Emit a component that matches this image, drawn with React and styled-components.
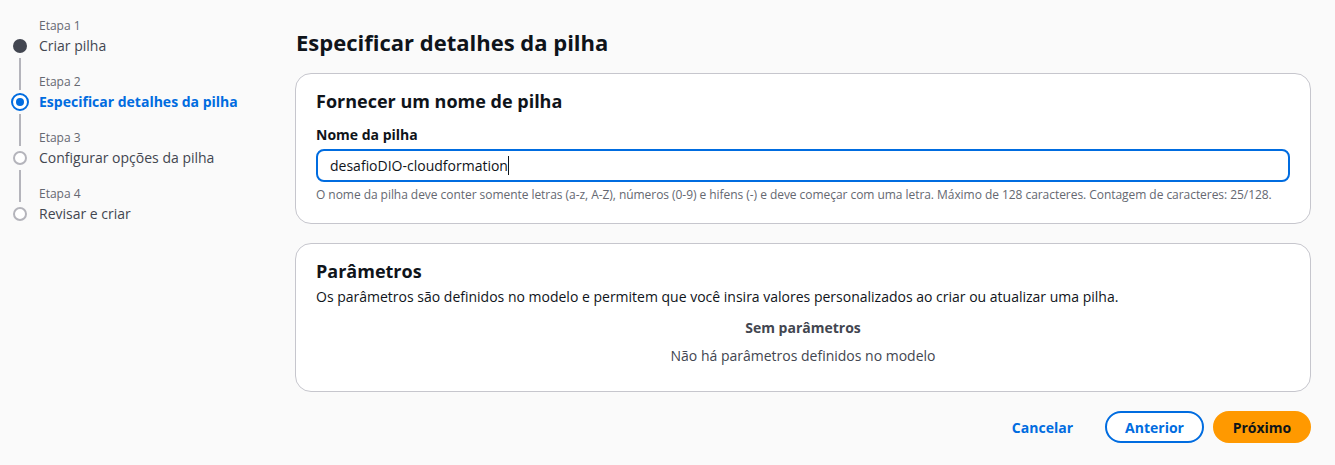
import styled, { createGlobalStyle } from "styled-components";

const GlobalStyle = createGlobalStyle`
    body {
        margin: 0;
        background: #fafafa;
        font-family: "Open Sans", "Noto Sans", sans-serif;
        color: #0f141a;
    }
`;

const Page = styled.div`
    display: flex;
    width: 1335px;
    height: 465px;
    box-sizing: border-box;
    padding: 16px 24px 0 13px;
`;

const Sidebar = styled.nav`
    width: 282px;
    flex-shrink: 0;
`;

const Step = styled.div`
    display: grid;
    grid-template-columns: 14px 1fr;
    grid-template-rows: 18px 24px 14px;
    column-gap: 12px;
`;

const Rail = styled.div`
    display: flex;
    justify-content: center;
`;

const Line = styled.div`
    width: 2px;
    height: 100%;
    background: ${(p) => (p.$hidden ? "transparent" : "#b4b4bb")};
`;

const Dot = styled.div`
    align-self: center;
    justify-self: center;
    width: ${(p) => (p.$state === "active" ? 18 : 14)}px;
    height: ${(p) => (p.$state === "active" ? 18 : 14)}px;
    box-sizing: border-box;
    border-radius: 50%;
    display: flex;
    align-items: center;
    justify-content: center;
    ${(p) =>
        p.$state === "done"
            ? "background: #424650;"
            : p.$state === "active"
            ? "border: 2px solid #006ce0; background: #fff;"
            : "border: 2px solid #b4b4bb; background: #fff;"}
`;

const InnerDot = styled.div`
    width: 8px;
    height: 8px;
    border-radius: 50%;
    background: #006ce0;
`;

const StepLabel = styled.div`
    padding-top: 2px;
    font-size: 12px;
    line-height: 16px;
    color: #656871;
`;

const StepTitle = styled.div`
    font-size: 14px;
    line-height: 24px;
    color: ${(p) => (p.$active ? "#006ce0" : "#424650")};
    font-weight: ${(p) => (p.$active ? 700 : 400)};
    white-space: nowrap;
`;

const Main = styled.main`
    flex: 1;
    display: flex;
    flex-direction: column;
`;

const PageTitle = styled.h1`
    margin: 12px 0 0 1px;
    font-size: 22px;
    line-height: 28px;
    font-weight: 700;
`;

const Card = styled.section`
    margin-top: ${(p) => p.$top}px;
    background: #fff;
    border: 1px solid #c6c6cd;
    border-radius: 16px;
    padding: 15px 20px ${(p) => p.$bottom}px;
`;

const CardTitle = styled.h2`
    margin: 0;
    font-size: 18px;
    line-height: 24px;
    font-weight: 700;
`;

const FieldLabel = styled.div`
    margin-top: 13px;
    font-size: 14px;
    line-height: 18px;
    font-weight: 700;
`;

const InputBox = styled.div`
    margin-top: 5px;
    height: 33px;
    box-sizing: border-box;
    border: 2px solid #006ce0;
    border-radius: 8px;
    padding: 0 12px;
    display: flex;
    align-items: center;
    font-size: 14px;
`;

const Caret = styled.span`
    width: 1px;
    height: 19px;
    background: #0f141a;
`;

const Hint = styled.div`
    margin-top: 5px;
    font-size: 12px;
    line-height: 16px;
    letter-spacing: -0.05px;
    color: #656871;
`;

const Description = styled.p`
    margin: 4px 0 0;
    font-size: 14px;
    line-height: 20px;
`;

const Empty = styled.div`
    margin-top: 11px;
    display: flex;
    flex-direction: column;
    align-items: center;
    gap: 8px;
    font-size: 14px;
    line-height: 20px;
    color: #424650;
`;

const EmptyTitle = styled.div`
    font-weight: 700;
`;

const Actions = styled.div`
    margin-top: 19px;
    display: flex;
    justify-content: flex-end;
    gap: 9px;
`;

const Button = styled.button`
    height: 32px;
    box-sizing: border-box;
    border-radius: 20px;
    padding: 0 16px;
    font-family: inherit;
    font-size: 14px;
    font-weight: 700;
    cursor: pointer;
    ${(p) =>
        p.$variant === "primary"
            ? "background: #ff9900; border: 2px solid #ff9900; color: #0f141a; width: 98px;"
            : p.$variant === "normal"
            ? "background: #fff; border: 2px solid #006ce0; color: #006ce0; width: 99px;"
            : "background: transparent; border: 2px solid transparent; color: #006ce0; padding: 0 20px; margin-right: 1px;"}
`;

const steps = [
    { label: "Etapa 1", title: "Criar pilha", state: "done" },
    { label: "Etapa 2", title: "Especificar detalhes da pilha", state: "active" },
    { label: "Etapa 3", title: "Configurar opções da pilha", state: "todo" },
    { label: "Etapa 4", title: "Revisar e criar", state: "todo" },
];

const App = () => {
    return (
        <>
            <GlobalStyle />
            <Page>
                <Sidebar>
                    {steps.map((s, i) => (
                        <Step key={s.label}>
                            <Rail>
                                <Line $hidden={i === 0} />
                            </Rail>
                            <StepLabel>{s.label}</StepLabel>
                            <Dot $state={s.state}>
                                {s.state === "active" && <InnerDot />}
                            </Dot>
                            <StepTitle $active={s.state === "active"}>{s.title}</StepTitle>
                            <Rail>
                                <Line $hidden={i === steps.length - 1} />
                            </Rail>
                            <div />
                        </Step>
                    ))}
                </Sidebar>
                <Main>
                    <PageTitle>Especificar detalhes da pilha</PageTitle>
                    <Card $top={17} $bottom={20}>
                        <CardTitle>Fornecer um nome de pilha</CardTitle>
                        <FieldLabel>Nome da pilha</FieldLabel>
                        <InputBox>
                            desafioDIO-cloudformation
                            <Caret />
                        </InputBox>
                        <Hint>
                            O nome da pilha deve conter somente letras (a-z, A-Z), números (0-9) e hifens (-) e deve começar com uma letra. Máximo de 128 caracteres. Contagem de caracteres: 25/128.
                        </Hint>
                    </Card>
                    <Card $top={19} $bottom={25}>
                        <CardTitle>Parâmetros</CardTitle>
                        <Description>
                            Os parâmetros são definidos no modelo e permitem que você insira valores personalizados ao criar ou atualizar uma pilha.
                        </Description>
                        <Empty>
                            <EmptyTitle>Sem parâmetros</EmptyTitle>
                            <div>Não há parâmetros definidos no modelo</div>
                        </Empty>
                    </Card>
                    <Actions>
                        <Button $variant="link">Cancelar</Button>
                        <Button $variant="normal">Anterior</Button>
                        <Button $variant="primary">Próximo</Button>
                    </Actions>
                </Main>
            </Page>
        </>
    );
};

export default App;
